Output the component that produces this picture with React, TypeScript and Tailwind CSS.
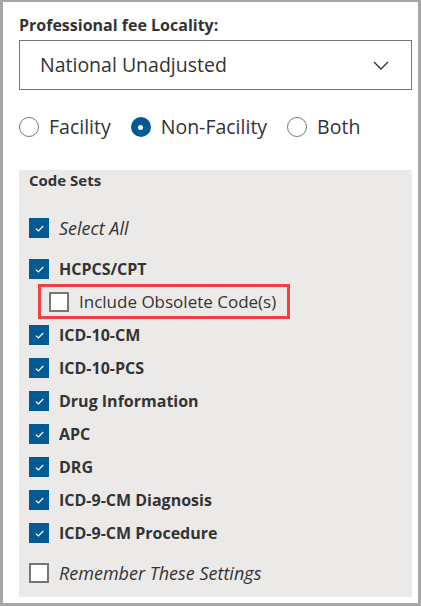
import React from "react";

const font = { fontFamily: '"Open Sans", "Noto Sans", sans-serif' };

function Check({ checked }: { checked: boolean }) {
  if (!checked) {
    return <span className="w-5 h-5 shrink-0 bg-white border-2 border-[#767676]" />;
  }
  return (
    <span className="w-5 h-5 shrink-0 bg-[#005a94] flex items-center justify-center">
      <svg width="9" height="7" viewBox="0 0 9 7" fill="none">
        <path d="M0.8 3.6 L3.4 6 L8.2 1" stroke="white" strokeWidth="1.2" />
      </svg>
    </span>
  );
}

function Radio({ selected }: { selected: boolean }) {
  if (selected) {
    return (
      <span className="w-5 h-5 rounded-full bg-[#005a94] flex items-center justify-center">
        <span className="w-[5px] h-[5px] rounded-full bg-white" />
      </span>
    );
  }
  return <span className="w-5 h-5 rounded-full bg-white border border-[#767676]" />;
}

const codeSets = [
  "ICD-10-CM",
  "ICD-10-PCS",
  "Drug Information",
  "APC",
  "DRG",
  "ICD-9-CM Diagnosis",
  "ICD-9-CM Procedure",
];

export default function App() {
  return (
    <div
      className="w-[421px] h-[606px] bg-white border-[3px] border-t-2 border-[#a6a6a6] text-[#333333]"
      style={font}
    >
      <div className="pl-4 pr-[6px] pt-[8px]">
        {/* Locality */}
        <div className="h-[30px] text-[16px] font-bold leading-[30px]">Professional fee Locality:</div>
        <div className="h-[50px] border border-[#767676] flex items-center justify-between pl-5 pr-[22px]">
          <span className="text-[19.5px]">National Unadjusted</span>
          <svg width="16" height="9" viewBox="0 0 16 9" fill="none">
            <path d="M1 1 L8 8 L15 1" stroke="#333" strokeWidth="1.4" />
          </svg>
        </div>

        {/* Fee type */}
        <div className="mt-[27px] h-5 flex items-center gap-5 text-[19.5px]">
          <label className="flex items-center gap-[10px]">
            <Radio selected={false} />
            <span>Facility</span>
          </label>
          <label className="flex items-center gap-[10px]">
            <Radio selected />
            <span>Non-Facility</span>
          </label>
          <label className="flex items-center gap-[10px]">
            <Radio selected={false} />
            <span>Both</span>
          </label>
        </div>

        {/* Code sets */}
        <div className="mt-[33px] h-[427px] bg-[#eceae9] pl-[10px]">
          <div className="text-[15px] font-bold leading-[20px]">Code Sets</div>
          <div className="mt-[28px] h-5 flex items-center gap-[10px]">
            <Check checked />
            <span className="text-[18px] italic">Select All</span>
          </div>
          <div className="mt-[21px] h-5 flex items-center gap-[10px]">
            <Check checked />
            <span className="text-[16px] font-bold">HCPCS/CPT</span>
          </div>
          <div className="mt-[5px] ml-[9px] w-[252px] h-[35px] border-[3px] border-[#f04245] pl-2 flex items-center gap-[10px]">
            <Check checked={false} />
            <span className="text-[17px]">Include Obsolete Code(s)</span>
          </div>
          <div className="mt-[6px] flex flex-col gap-[13px]">
            {codeSets.map((name) => (
              <div key={name} className="h-5 flex items-center gap-[10px]">
                <Check checked />
                <span className="text-[16px] font-bold">{name}</span>
              </div>
            ))}
          </div>
          <div className="mt-5 h-5 flex items-center gap-[10px]">
            <Check checked={false} />
            <span className="text-[18px] italic">Remember These Settings</span>
          </div>
        </div>
      </div>
    </div>
  );
}
